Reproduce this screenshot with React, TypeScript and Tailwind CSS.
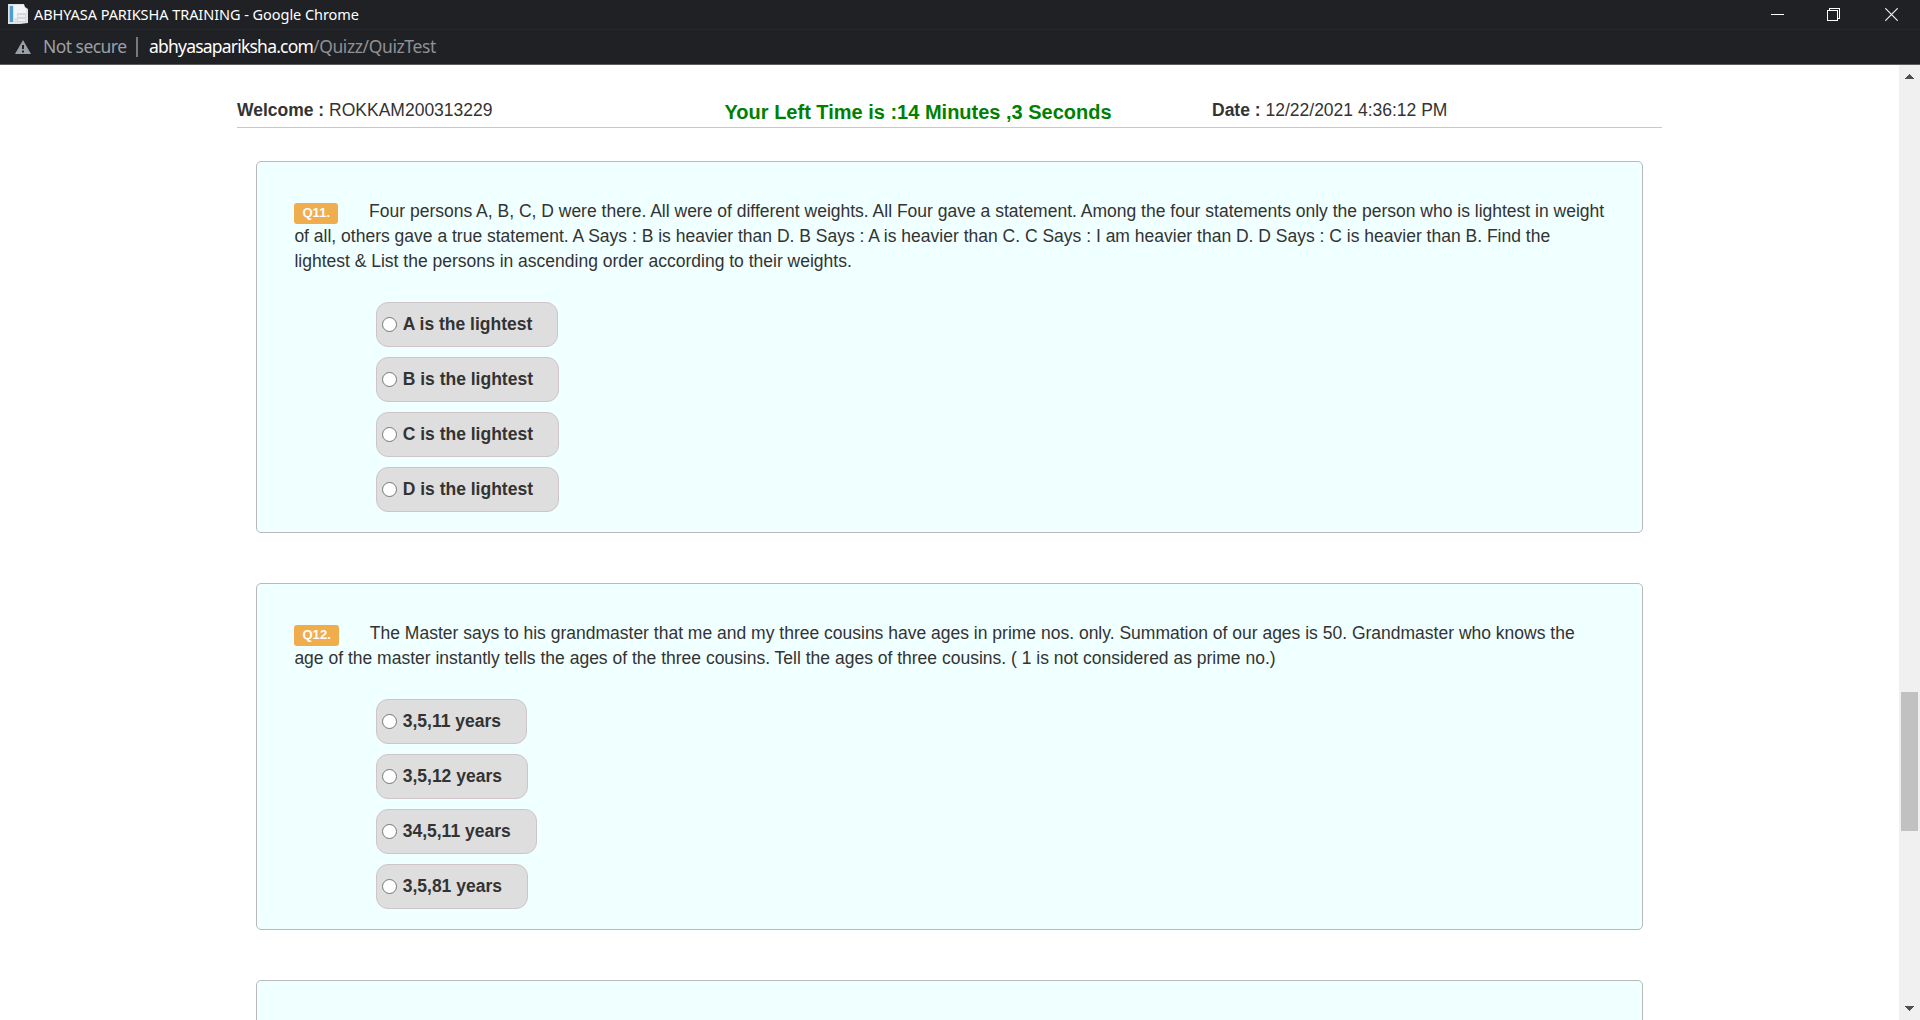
type Question = { id: string; lines: string[]; options: string[] };

const questions: Question[] = [
  {
    id: 'Q11.',
    lines: [
      'Four persons A, B, C, D were there. All were of different weights. All Four gave a statement. Among the four statements only the person who is lightest in weight',
      'of all, others gave a true statement. A Says : B is heavier than D. B Says : A is heavier than C. C Says : I am heavier than D. D Says : C is heavier than B. Find the',
      'lightest & List the persons in ascending order according to their weights.',
    ],
    options: ['A is the lightest', 'B is the lightest', 'C is the lightest', 'D is the lightest'],
  },
  {
    id: 'Q12.',
    lines: [
      'The Master says to his grandmaster that me and my three cousins have ages in prime nos. only. Summation of our ages is 50. Grandmaster who knows the',
      'age of the master instantly tells the ages of the three cousins. Tell the ages of three cousins. ( 1 is not considered as prime no.)',
    ],
    options: ['3,5,11 years', '3,5,12 years', '34,5,11 years', '3,5,81 years'],
  },
];

function PageIcon() {
  return (
    <svg width="20" height="20" viewBox="0 0 20 20" className="shrink-0">
      <path d="M0 0h16l1 3 3 2v14l-8 1H0z" fill="#e0e2e4" />
      <path d="M1 2h4v16H1z" fill="#4d9ed3" />
      <path d="M1 2h1v16H1z" fill="#a9d4ee" />
      <path d="M6 1h9l3 4v9H6z" fill="#f3f4f6" />
      <path d="M9 9h9v9H9z" fill="#d6d8dc" />
      <path d="M10 11h7v2h-7zM10 15h7v2h-7z" fill="#eceef0" />
    </svg>
  );
}

function WindowChrome() {
  return (
    <header className="h-[65px] shrink-0 border-b border-[#5b5d61] bg-[#202124] font-['Noto_Sans','Open_Sans',sans-serif]">
      <div className="flex h-[30px] items-center border-b border-[#27282b] pb-px pl-2">
        <PageIcon />
        <span className="ml-1.5 w-[330px] whitespace-nowrap pb-px text-[14.5px] leading-5 tracking-[-0.05px] text-white">
          ABHYASA PARIKSHA TRAINING - Google Chrome
        </span>
        <div className="ml-auto flex items-center pr-[22px]">
          <svg width="13" height="13" className="mr-[43px]" shapeRendering="crispEdges">
            <path d="M0 6.5h13" stroke="#fff" />
          </svg>
          <svg width="13" height="13" className="mr-[45px]" shapeRendering="crispEdges" fill="none" stroke="#fff">
            <path d="M.5 2.5h10v10H.5zM2.5 2V.5h10v10H11" />
          </svg>
          <svg width="13" height="13" stroke="#f0f0f0" strokeWidth="1.2">
            <path d="M.3.3l12.4 12.4M12.7.3.3 12.7" />
          </svg>
        </div>
      </div>
      <div className="flex h-[34px] items-center pl-[15px] text-[17.5px] leading-6">
        <svg width="16" height="14" viewBox="0 0 16 14">
          <path d="M8 0l8 14H0z" fill="#9aa0a6" />
          <path d="M7 5h2v4H7zM7 10.5h2v2H7z" fill="#202124" />
        </svg>
        <span className="ml-3 w-[84px] whitespace-nowrap pb-0.5 tracking-[-0.55px] text-[#9aa0a6]">Not secure</span>
        <span className="ml-[9px] h-5 w-0.5 bg-[#77797c]" />
        <span className="ml-[11px] whitespace-nowrap pb-0.5 tracking-[-0.4px] text-[#8e9195]">
          <span className="tracking-[-0.79px] text-white">abhyasapariksha.com</span>/Quizz/QuizTest
        </span>
      </div>
    </header>
  );
}

function Option({ name, label }: { name: string; label: string }) {
  return (
    <label className="flex h-[45px] items-center rounded-[12px] border border-[#cdc5c8] bg-[#dedede] pr-[25px] pl-[5px] font-bold">
      <input
        type="radio"
        name={name}
        className="mr-[5.7px] size-[15px] shrink-0 appearance-none rounded-full border border-[#767676] bg-white checked:border-4"
      />
      <span className="whitespace-nowrap">{label}</span>
    </label>
  );
}

function QuestionCard({ question }: { question: Question }) {
  return (
    <section className="mb-[50px] rounded-[5px] border border-[#b9b9b9] bg-[#f0ffff] px-[37px] pt-[37px] pb-5">
      <p className="pl-[0.4px] whitespace-nowrap">
        {question.lines.map((line, i) => (
          <span key={line} className="block h-[25px]">
            {i === 0 && (
              <span className="relative top-px mr-[31px] inline-block h-[21px] rounded-[3px] bg-[#f0ad4e] px-2 align-baseline text-[13.125px] leading-[21px] font-bold text-white">
                <span className="relative -top-px">{question.id}</span>
              </span>
            )}
            {line}
          </span>
        ))}
      </p>
      <div className="mt-[28px] ml-[82px] flex flex-col items-start gap-2.5">
        {question.options.map((option) => (
          <Option key={option} name={question.id} label={option} />
        ))}
      </div>
    </section>
  );
}

function Scrollbar() {
  return (
    <div className="flex w-[21px] shrink-0 flex-col items-center bg-[#f0f0f0]">
      <svg width="9" height="5" className="mt-[9px]" shapeRendering="crispEdges">
        <path d="M0 5 4.5 0 9 5z" fill="#505050" />
      </svg>
      <div className="mt-[613px] h-[139px] w-[17px] bg-[#c1c1c1]" />
      <svg width="9" height="5" className="mt-auto mb-[9px]" shapeRendering="crispEdges">
        <path d="M0 0h9L4.500 5z" fill="#505050" />
      </svg>
    </div>
  );
}

export default function App() {
  return (
    <div className="flex h-[1020px] w-[1920px] flex-col overflow-hidden bg-white">
      <WindowChrome />
      <div className="flex min-h-0 flex-1">
        <main className="min-w-0 flex-1 overflow-hidden pl-[237px] font-['Liberation_Sans',Arial,sans-serif] text-[17.5px] leading-[25px] text-[#333]">
          <div className="grid h-[63px] w-[1425px] grid-cols-[487.5px_487.5px_450px] border-b border-[#c8c8c8] pt-[33px]">
            <div>
              <b>Welcome :</b> ROKKAM200313229
            </div>
            <div className="pt-0.5 text-[20px] font-bold text-[#008000]">Your Left Time is :14 Minutes ,3 Seconds</div>
            <div>
              <b>Date :</b> 12/22/2021 4:36:12 PM
            </div>
          </div>
          <div className="mt-[33px] ml-[19px] w-[1387px]">
            {questions.map((question) => (
              <QuestionCard key={question.id} question={question} />
            ))}
            <section className="h-[300px] rounded-[5px] border border-[#b9b9b9] bg-[#f0ffff]" />
          </div>
        </main>
        <Scrollbar />
      </div>
    </div>
  );
}
